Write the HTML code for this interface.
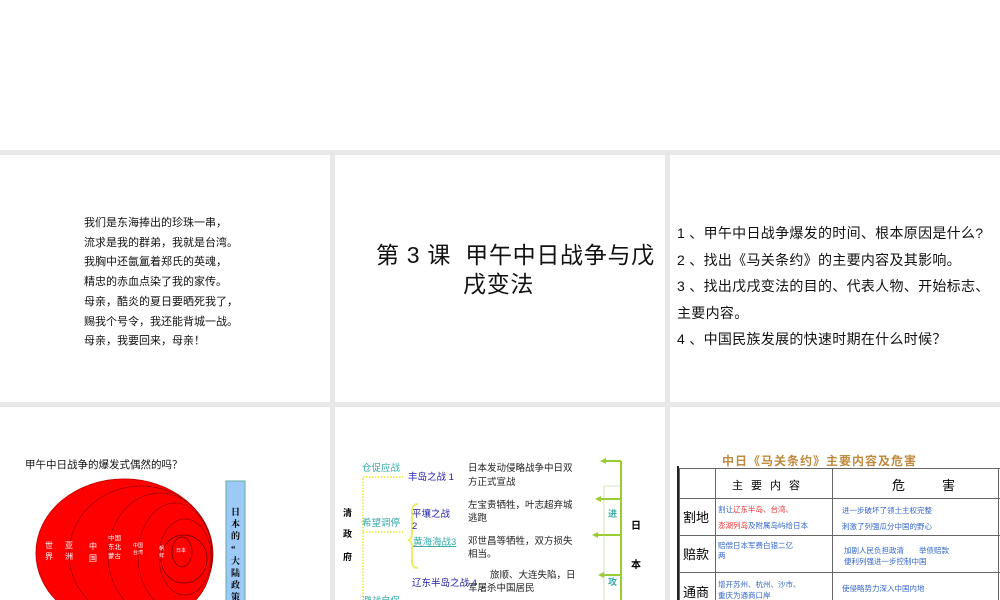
<!DOCTYPE html>
<html><head><meta charset="utf-8"><style>
*{margin:0;padding:0;box-sizing:border-box}
body{width:1000px;height:600px;position:relative;overflow:hidden;background:#fff;font-family:"Liberation Sans","Noto Sans CJK SC",sans-serif;color:#111}
.gray{position:absolute;left:0;top:150px;width:1000px;height:450px;background:#e8e8e8}
.s{position:absolute;background:#fff;overflow:hidden}
.a{position:absolute;white-space:nowrap}
</style></head><body>
<div class="gray"></div>
<div class="s" style="left:0;top:155px;width:330px;height:247px"></div>
<div class="s" style="left:335px;top:155px;width:330px;height:247px"></div>
<div class="s" style="left:670px;top:155px;width:330px;height:247px"></div>
<div class="s" style="left:0;top:407px;width:330px;height:193px"></div>
<div class="s" style="left:335px;top:407px;width:330px;height:193px"></div>
<div class="s" style="left:670px;top:407px;width:330px;height:193px"></div>

<!-- slide1 poem -->
<div class="a" style="left:84px;top:214px;font-size:11px;line-height:19.7px">我们是东海捧出的珍珠一串，<br>流求是我的群弟，我就是台湾。<br>我胸中还氤氲着郑氏的英魂，<br>精忠的赤血点染了我的家传。<br>母亲，酷炎的夏日要晒死我了，<br>赐我个号令，我还能背城一战。<br>母亲，我要回来，母亲！</div>

<!-- slide2 title -->
<div class="a" style="left:376px;top:240px;font-size:23px;line-height:30px;letter-spacing:0.7px">第 3 课&nbsp; 甲午中日战争与戊</div>
<div class="a" style="left:463px;top:269px;font-size:23px;line-height:30px;letter-spacing:0.7px">戌变法</div>

<!-- slide3 -->
<div class="a" style="left:677px;top:220px;font-size:14px;line-height:26.5px;letter-spacing:0.3px">1 、甲午中日战争爆发的时间、根本原因是什么?<br>2 、找出《马关条约》的主要内容及其影响。<br>3 、找出戊戌变法的目的、代表人物、开始标志、<br>主要内容。<br>4 、中国民族发展的快速时期在什么时候？</div>

<!-- slide4 -->
<div class="a" style="left:25px;top:457px;font-size:10.5px">甲午中日战争的爆发式偶然的吗？</div>
<svg class="a" style="left:0;top:407px" width="330" height="193">
<ellipse cx="124" cy="146" rx="88" ry="74" fill="#f00" stroke="#c00"/>
<ellipse cx="141" cy="147" rx="72" ry="68" fill="#f00" stroke="#900" stroke-width=".7"/>
<ellipse cx="160" cy="148" rx="52" ry="62" fill="#f00" stroke="#900" stroke-width=".7"/>
<ellipse cx="175" cy="149" rx="37" ry="53" fill="#f00" stroke="#900" stroke-width=".7"/>
<ellipse cx="185" cy="150" rx="26" ry="38" fill="#f00" stroke="#900" stroke-width=".7"/>
<ellipse cx="184" cy="152" rx="23" ry="24" fill="#f00" stroke="#600" stroke-width=".7"/>
<ellipse cx="182" cy="145" rx="10" ry="15" fill="#f00" stroke="#600" stroke-width=".7"/>
<g fill="#fff" font-size="8" font-family="Liberation Sans,Noto Sans CJK SC,sans-serif">
<text x="45" y="141">世</text><text x="45" y="152">界</text>
<text x="65" y="141">亚</text><text x="65" y="152">洲</text>
<text x="89" y="142">中</text><text x="89" y="154">国</text>
<text x="108" y="133" font-size="6.5">中国</text><text x="108" y="142" font-size="6.5">东北</text><text x="108" y="151" font-size="6.5">蒙古</text>
<text x="133" y="140" font-size="5">中国</text><text x="133" y="147" font-size="5">台湾</text>
<text x="159" y="143" font-size="5">朝</text><text x="159" y="150" font-size="5">鲜</text>
<text x="176" y="145" font-size="5">日本</text>
</g>
<rect x="226" y="74" width="19" height="125" fill="#9cc9f5" stroke="#6aa"/>
<g font-size="9" font-weight="bold" font-family="Liberation Serif,Noto Serif CJK SC,serif" fill="#000">
<text x="231" y="108">日</text><text x="231" y="120">本</text><text x="231" y="132">的</text><text x="231" y="145">“</text><text x="231" y="157">大</text><text x="231" y="169">陆</text><text x="231" y="181">政</text><text x="231" y="193">策</text>
</g>
</svg>

<!-- slide5 -->
<svg class="a" style="left:335px;top:407px" width="330" height="193" font-family="Liberation Sans,Noto Sans CJK SC,sans-serif">
<g stroke="#ee6" stroke-width="2" stroke-dasharray="1.5 1.5" fill="none">
<path d="M28 190 V70 H68"/><path d="M28 125 H68"/>
</g>
<path d="M83 97 q-6 0 -6 8 v20 q0 8 -4 8 q4 0 4 8 v14 q0 6 6 6" stroke="#ee6" stroke-width="2" fill="none"/>
<g font-size="9" font-weight="bold" fill="#000"><text x="8" y="109">清</text><text x="8" y="130">政</text><text x="8" y="153">府</text></g>
<g font-size="9.5" fill="#3aa"><text x="27" y="64">仓促应战</text><text x="27" y="119">希望调停</text><text x="27" y="197">避战自保</text></g>
<g font-size="9.5" fill="#22a"><text x="73" y="73">丰岛之战 1</text><text x="77" y="110">平壤之战</text><text x="77" y="122">2</text><text x="77" y="179">辽东半岛之战 4</text></g>
<text x="78" y="138" font-size="9.5" fill="#3aa" text-decoration="underline">黄海海战3</text>
<g font-size="9.5" fill="#222">
<text x="133" y="64">日本发动侵略战争中日双</text><text x="133" y="78">方正式宣战</text>
<text x="133" y="101">左宝贵牺牲，叶志超弃城</text><text x="133" y="114">逃跑</text>
<text x="133" y="137">邓世昌等牺牲，双方损失</text><text x="133" y="150">相当。</text>
<text x="155" y="171">旅顺、大连失陷，日</text><text x="133" y="184">军屠杀中国居民</text>
</g>
<g stroke="#9c3" stroke-width="2" fill="none">
<path d="M286 54 V193"/><path d="M270 54 H286 M265 92 H286 M262 128 H286 M268 168 H286"/>
</g>
<path d="M269 79 H286 M269 79 V193" stroke="#ac8" stroke-width=".6" fill="none"/>
<g fill="#9c3"><path d="M265 54 l6 -3 v6z"/><path d="M260 92 l6 -3 v6z"/><path d="M257 128 l6 -3 v6z"/><path d="M263 168 l6 -3 v6z"/></g>
<g font-size="9" font-weight="bold" fill="#3aa"><text x="273" y="110">进</text><text x="273" y="178">攻</text></g>
<g font-size="10" font-weight="bold" fill="#000"><text x="296" y="122">日</text><text x="296" y="161">本</text></g>
</svg>

<!-- slide6 -->
<div class="a" style="left:722px;top:452px;font-size:12px;font-weight:bold;color:#c08a40;letter-spacing:1px">中日《马关条约》主要内容及危害</div>
<svg class="a" style="left:670px;top:407px" width="330" height="193" font-family="Liberation Sans,Noto Sans CJK SC,sans-serif">
<g stroke="#666" stroke-width="1" fill="none">
<path d="M9.5 61 V193 M45.5 62 V193 M162.5 62 V193 M328.5 62 V193 M9 61.5 H330 M9 91.5 H330 M9 128.5 H330 M9 165.5 H330"/>
</g>
<path d="M8 59 V193" stroke="#222" stroke-width="2"/>
<g font-size="11" fill="#000"><text x="62" y="82" letter-spacing="8">主要内容</text><text x="222" y="83" font-size="13">危</text><text x="272" y="83" font-size="13">害</text>
<text x="13" y="115" font-size="13">割地</text><text x="13" y="152" font-size="13">赔款</text><text x="13" y="190" font-size="13">通商</text></g>
<g font-size="7.5" fill="#36c">
<text x="48" y="105">割让<tspan fill="#e33">辽东半岛、台湾、</tspan></text>
<text x="48" y="121"><tspan fill="#e33">澎湖列岛</tspan>及附属岛屿给日本</text>
<text x="48" y="141">赔偿日本军费白银二亿</text><text x="48" y="151">两</text>
<text x="48" y="180">增开苏州、杭州、沙市、</text><text x="48" y="191">重庆为通商口岸</text>
<text x="172" y="106">进一步破坏了领土主权完整</text>
<text x="172" y="122">刺激了列强瓜分中国的野心</text>
<text x="174" y="146">加剧人民负担政清　　举债赔款</text>
<text x="174" y="157">便利列强进一步控制中国</text>
<text x="172" y="184">使侵略势力深入中国内地</text>
</g>
</svg>
</body></html>
